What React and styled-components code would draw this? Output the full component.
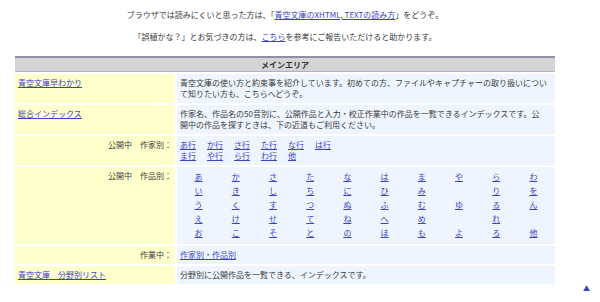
import React from "react";
import styled, { createGlobalStyle } from "styled-components";

const Global = createGlobalStyle`
  body {
    margin: 0;
    background: #ffffff;
    font-family: "Noto Sans CJK JP", "Noto Sans", sans-serif;
    font-size: 8px;
    line-height: 11px;
    color: #3a3a3a;
  }
`;

/* cuerpo de la pagina */
const Page = styled.div`
  width: 600px;
  height: 302px;
  padding-top: 9px;
  box-sizing: border-box;
`;

const Intro = styled.div`
  width: 540px;
  margin-left: 15px;
  text-align: center;
`;

const P = styled.p`
  margin: 0 0 11px;
`;

const A = styled.a`
  color: #3d44c4;
  text-decoration: underline;
`;

/* tabla principal */
const Table = styled.div`
  width: 540px;
  margin: 14px 0 0 15px;
  display: grid;
  grid-template-columns: 160px 1fr;
  gap: 2px;
`;

const Head = styled.div`
  grid-column: 1 / -1;
  height: 13px;
  line-height: 13px;
  background: #d4d4d4;
  border-top: 2px solid #8e8ea4;
  border-bottom: 1px solid #aeb0cc;
  text-align: center;
  font-weight: bold;
  color: #333;
`;

const Label = styled.div`
  background: #ffffcc;
  padding: 3px 3px 4px;
  text-align: ${(p) => (p.$right ? "right" : "left")};
`;

const Cell = styled.div`
  background: #eef5ff;
  padding: 3px 3px 4px;
`;

const Links = styled.div`
  display: grid;
  grid-template-columns: repeat(6, 27px);
`;

const Kana = styled.div`
  display: grid;
  grid-template-columns: repeat(10, 1fr);
  grid-template-rows: repeat(5, 14px);
  grid-auto-flow: column;
  line-height: 14px;
  text-align: center;
`;

const Foot = styled.div`
  display: flex;
  justify-content: flex-end;
  padding: 0 10px 0 0;
  color: #2a48a8;
  font-size: 7px;
  line-height: 9px;
`;

const cols = [
  ["あ", "い", "う", "え", "お"],
  ["か", "き", "く", "け", "こ"],
  ["さ", "し", "す", "せ", "そ"],
  ["た", "ち", "つ", "て", "と"],
  ["な", "に", "ぬ", "ね", "の"],
  ["は", "ひ", "ふ", "へ", "ほ"],
  ["ま", "み", "む", "め", "も"],
  ["や", "", "ゆ", "", "よ"],
  ["ら", "り", "る", "れ", "ろ"],
  ["わ", "を", "ん", "", "他"],
];

function App() {
  return (
    <Page>
      <Global />
      <Intro>
        <P>
          ブラウザでは読みにくいと思った方は、「<A href="#">青空文庫のXHTML, TEXTの読み方</A>」をどうぞ。
        </P>
        <P>
          「誤植かな？」とお気づきの方は、<A href="#">こちら</A>を参考にご報告いただけると助かります。
        </P>
      </Intro>

      <Table>
        <Head>メインエリア</Head>

        <Label>
          <A href="#">青空文庫早わかり</A>
        </Label>
        <Cell>
          青空文庫の使い方と約束事を紹介しています。初めての方、ファイルやキャプチャーの取り扱いについて知りたい方も、こちらへどうぞ。
        </Cell>

        <Label>
          <A href="#">総合インデックス</A>
        </Label>
        <Cell>
          作家名、作品名の50音別に、公開作品と入力・校正作業中の作品を一覧できるインデックスです。公
          <br />
          開中の作品を探すときは、下の近道もご利用ください。
        </Cell>

        <Label $right>公開中　作家別：</Label>
        <Cell>
          <Links>
            {["あ行", "か行", "さ行", "た行", "な行", "は行"].map((t) => (
              <span key={t}><A href="#">{t}</A></span>
            ))}
          </Links>
          <Links>
            {["ま行", "や行", "ら行", "わ行", "他"].map((t) => (
              <span key={t}><A href="#">{t}</A></span>
            ))}
          </Links>
        </Cell>

        <Label $right>公開中　作品別：</Label>
        <Cell>
          <Kana>
            {cols.map((c, i) =>
              c.map((k, j) => (
                <div key={i + "-" + j}>{k ? <A href="#">{k}</A> : null}</div>
              ))
            )}
          </Kana>
        </Cell>

        <Label $right>作業中：</Label>
        <Cell>
          <A href="#">作家別・作品別</A>
        </Cell>

        <Label>
          <A href="#">青空文庫　分野別リスト</A>
        </Label>
        <Cell>分野別に公開作品を一覧できる、インデックスです。</Cell>
      </Table>

      <Foot>▲</Foot>
    </Page>
  );
}

export default App;
